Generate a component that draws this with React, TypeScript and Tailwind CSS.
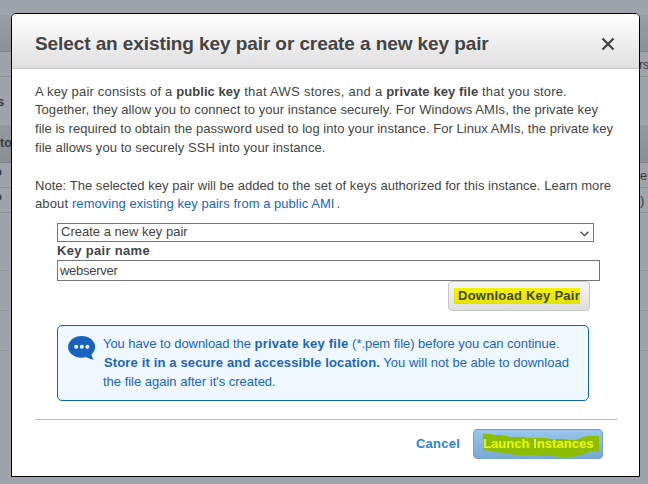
function PageBehind() {
  return (
    <div className="flex h-[484px] flex-col overflow-hidden bg-[#9fa3ab] text-[13px] leading-[25px] text-[#393b3e]">
      <div className="h-[15px]" />
      <div className="h-[37px] border-b border-[#7f838a] bg-linear-to-b from-[#999da5] to-[#8c9098]" />
      <div className="flex h-[25px] justify-end border-b border-[#8b8f96]">
        <span className="w-[9px] tracking-[-0.7px]">rs</span>
      </div>
      <div className="h-12 pt-3 font-bold">
        <span className="-ml-[3px]">s</span>
      </div>
      <div className="h-[38px] border-b border-[#7f838a] bg-linear-to-b from-[#94989f] to-[#8a8e95] pt-[6px] text-[12.5px] font-bold">
        to
      </div>
      <div className="flex h-[25px] justify-between border-b border-[#8b8f96]">
        <span className="-ml-[6px] leading-[18px] font-bold">o</span>
        <span className="w-2">e</span>
      </div>
      <div className="flex h-[25px] justify-between border-b border-[#8b8f96]">
        <span className="-ml-[6px] leading-[18px] font-bold">o</span>
        <span className="w-2">)</span>
      </div>
      <div className="h-[58px] border-b border-[#92969d]" />
      <div className="h-10 border-b border-[#92969d]" />
      <div className="h-10 border-b border-[#92969d]" />
    </div>
  );
}

function ChatIcon() {
  return (
    <svg width="28" height="25" viewBox="0 0 28 25" className="mt-[10px] ml-[10px] shrink-0" fill="#1763bd">
      <ellipse cx="13.6" cy="10.9" rx="13.5" ry="10.9" />
      <path d="M24 15.5 C22.8 18 24 21.5 25.8 23.8 C22.5 23.4 19.5 22.2 17 20 Z" />
      <g fill="#eff7ff">
        <circle cx="8.2" cy="10.8" r="2" />
        <circle cx="13.8" cy="10.8" r="2" />
        <circle cx="19.4" cy="10.8" r="2" />
      </g>
    </svg>
  );
}

function Dialog() {
  return (
    <div className="absolute top-[13px] left-[11px] flex h-[464px] w-[629px] flex-col overflow-hidden rounded-t-[5px] border border-black bg-white text-[13px] leading-[19px] whitespace-pre text-[#444]">
      <div className="flex h-[55px] shrink-0 items-center justify-between border-b border-[#c6c6c6] bg-linear-to-b from-white to-[#dfdfdf] pr-[24px] pl-[23px]">
        <h1 className="pt-[6px] text-[19px] leading-6 font-bold tracking-[-0.09px]">Select an existing key pair or create a new key pair</h1>
        <svg width="14" height="14" viewBox="0 0 14 14" className="mt-[6px]" stroke="#444" strokeWidth="2.3" fill="none">
          <path d="M1.5 1.5 L12.5 12.5 M12.5 1.5 L1.5 12.5" />
        </svg>
      </div>

      <div className="mt-[13px] ml-[23px]">
        <p className="h-[18px]">
          <span className="tracking-[0.19px]">A key pair consists of a </span>
          <b className="tracking-[0.042px]">public key</b>
          <span className="tracking-[0.262px]"> that AWS stores, and a </span>
          <b className="tracking-[0.104px]">private key file</b>
          <span className="tracking-[0.16px]"> that you store.</span>
        </p>
        <p className="h-[19px] tracking-[0.064px]">Together, they allow you to connect to your instance securely. For Windows AMIs, the private key</p>
        <p className="h-[19px] tracking-[0.041px]">file is required to obtain the password used to log into your instance. For Linux AMIs, the private key</p>
        <p className="h-[19px] tracking-[0.071px]">file allows you to securely SSH into your instance.</p>
        <p className="mt-[19px] h-[18px] tracking-[0.039px]">Note: The selected key pair will be added to the set of keys authorized for this instance. Learn more</p>
        <p className="h-[19px]">
          <span className="tracking-[0.141px]">about </span>
          <span className="tracking-[0.035px] text-[#1b65bf]">removing existing key pairs from a public AMI</span>
          <span className="ml-[2px]">.</span>
        </p>
      </div>

      <div className="mt-[10px] ml-[45px] flex h-[19px] w-[537px] shrink-0 items-center justify-between border border-[#747678] pr-1 pl-[3px]">
        <span className="-mt-[3px] tracking-[0.01px]">Create a new key pair</span>
        <svg width="9" height="6" viewBox="0 0 9 6" className="mt-[3px]" fill="none" stroke="#444" strokeWidth="1.3">
          <path d="M0.6 0.8 L4.5 4.7 L8.4 0.8" />
        </svg>
      </div>
      <div className="ml-[45px] h-[18px] shrink-0 leading-[18px] font-bold tracking-[0.317px]">Key pair name</div>
      <div className="ml-[45px] flex h-[21px] w-[543px] shrink-0 items-center border border-[#747678] pl-[2px] tracking-[-0.28px]">webserver</div>
      <div className="ml-[436px] flex h-[30px] w-[142px] shrink-0 items-center rounded-[4px] border border-[#c6c6c6] bg-linear-to-b from-[#f6f6f6] to-[#dedede] pl-[5px]">
        <span className="flex h-4 w-[126px] items-center bg-linear-to-b from-[#f4f400] to-[#e2e200] pb-[2px] pl-[4px] font-bold tracking-[0.25px] text-[#454500]">
          Download Key Pair
        </span>
      </div>

      <div className="mt-[14px] ml-[45px] flex h-[76px] w-[532px] shrink-0 rounded-[5px] border border-[#0d67b5] bg-[#eff7ff] text-[#1b65bf]">
        <ChatIcon />
        <div className="mt-2 ml-[7px]">
          <p>
            <span className="tracking-[-0.05px]">You have to download the </span>
            <b className="tracking-[0.229px]">private key file</b>
            <span className="tracking-[-0.038px]"> (*.pem file) before you can continue.</span>
          </p>
          <p className="pl-px">
            <b className="tracking-[0.144px]">Store it in a secure and accessible location.</b>
            <span className="tracking-[0.01px]"> You will not be able to download</span>
          </p>
          <p className="tracking-[-0.01px]">the file again after it's created.</p>
        </div>
      </div>

      <div className="mt-[18px] ml-[23px] flex w-[582px] shrink-0 items-start justify-end border-t border-[#b9b9b9] pt-[9px] pr-[14px] font-bold">
        <span className="mt-[5px] mr-[13px] tracking-[0.227px] text-[#2f7fd9]">Cancel</span>
        <div className="grid h-[30px] w-[130px] items-center rounded-[4px] border border-[#74a3ca] bg-linear-to-b from-[#98c6ec] to-[#78a9d2]">
          <svg width="116" height="23" viewBox="0 0 116 23" className="col-start-1 row-start-1 mt-[2px] ml-[9px]" fill="#8dbd00">
            <path d="M0 0 H9 L10 1 H18 L28 3 H40 L43 4 H64 L67 5 H80 L88 6 H93 L100 3 L104 2 H116 V18 L107 17 L103 20 L95 21 L90 23 H75 L70 22 L58 22 L53 21 H32 L27 20 L20 19 L12 18 L7 17 L0 16 Z" />
          </svg>
          <span className="col-start-1 row-start-1 -mt-px ml-[9px] tracking-[0.04px] text-[#e9fb00]">
            Launch <span className="bg-linear-to-b from-white from-30% to-[#e9fb00] to-32% bg-clip-text text-transparent">I</span>nstances
          </span>
        </div>
      </div>
    </div>
  );
}

export default function App() {
  return (
    <div className="relative h-[484px] w-[648px] overflow-hidden font-['Liberation_Sans',Arial,sans-serif]">
      <PageBehind />
      <Dialog />
    </div>
  );
}
